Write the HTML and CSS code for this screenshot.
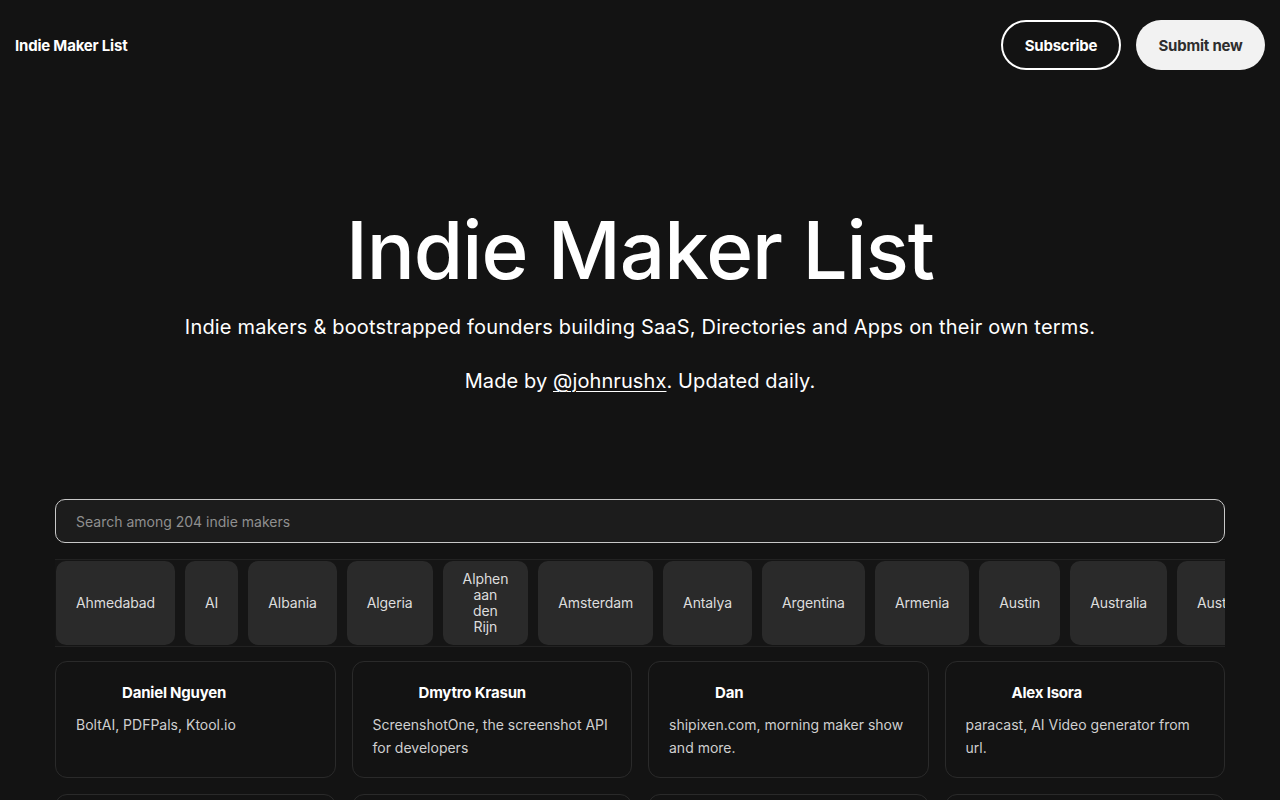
FILE: index.html
```html
<!DOCTYPE html>
<html lang="en">
<head>
<meta charset="utf-8">
<title>Indie Maker List</title>
<link rel="stylesheet" href="styles.css">
</head>
<body>
<header class="topbar">
  <a class="brand" href="#">Indie Maker List</a>
  <nav class="actions">
    <a class="btn btn-outline" href="#">Subscribe</a>
    <a class="btn btn-solid" href="#">Submit new</a>
  </nav>
</header>

<section class="hero">
  <h1 class="hero-title">Indie Maker List</h1>
  <p class="hero-sub">Indie makers &amp; bootstrapped founders building SaaS, Directories and Apps on their own terms.</p>
  <p class="hero-by">Made by <a href="#">@johnrushx</a>. Updated daily.</p>
</section>

<main class="content">
  <input class="search" type="text" placeholder="Search among 204 indie makers">
  <div class="tags">
    <span class="tag">Ahmedabad</span>
    <span class="tag">AI</span>
    <span class="tag">Albania</span>
    <span class="tag">Algeria</span>
    <span class="tag">Alphen aan den Rijn</span>
    <span class="tag">Amsterdam</span>
    <span class="tag">Antalya</span>
    <span class="tag">Argentina</span>
    <span class="tag">Armenia</span>
    <span class="tag">Austin</span>
    <span class="tag">Australia</span>
    <span class="tag">Austria</span>
    <span class="tag">Bali</span>
  </div>
  <div class="grid">
    <article class="card">
      <div class="card-head"><span class="avatar"></span><h3 class="name">Daniel Nguyen</h3></div>
      <p class="desc">BoltAI, PDFPals, Ktool.io</p>
    </article>
    <article class="card">
      <div class="card-head"><span class="avatar"></span><h3 class="name">Dmytro Krasun</h3></div>
      <p class="desc">ScreenshotOne, the screenshot API for developers</p>
    </article>
    <article class="card">
      <div class="card-head"><span class="avatar"></span><h3 class="name">Dan</h3></div>
      <p class="desc">shipixen.com, morning maker show and more.</p>
    </article>
    <article class="card">
      <div class="card-head"><span class="avatar"></span><h3 class="name">Alex Isora</h3></div>
      <p class="desc">paracast, AI Video generator from url.</p>
    </article>
    <article class="card">
      <div class="card-head"><span class="avatar"></span><h3 class="name">Marc Lou</h3></div>
      <p class="desc">ShipFast, ByeDispute and more.</p>
    </article>
    <article class="card">
      <div class="card-head"><span class="avatar"></span><h3 class="name">Pieter Levels</h3></div>
      <p class="desc">Nomad List, Remote OK, Photo AI</p>
    </article>
    <article class="card">
      <div class="card-head"><span class="avatar"></span><h3 class="name">Tony Dinh</h3></div>
      <p class="desc">TypingMind, DevUtils</p>
    </article>
    <article class="card">
      <div class="card-head"><span class="avatar"></span><h3 class="name">Danny Postma</h3></div>
      <p class="desc">HeadshotPro, Landingfolio</p>
    </article>
  </div>
</main>
</body>
</html>
```

FILE: styles.css
```css
* { box-sizing: border-box; }

html, body {
  margin: 0;
  padding: 0;
  background: #131313;
  color: #ffffff;
  font-family: Inter, "Noto Sans", "Liberation Sans", sans-serif;
}

a { color: inherit; text-decoration: none; }

.topbar {
  display: flex;
  align-items: center;
  justify-content: space-between;
  padding: 20px 15px;
}

.brand {
  font-size: 15px;
  font-weight: 700;
  letter-spacing: -0.2px;
}

.actions {
  display: flex;
  gap: 15px;
}

.btn {
  display: inline-flex;
  align-items: center;
  justify-content: center;
  height: 50px;
  border-radius: 25px;
  font-size: 15px;
  font-weight: 700;
  letter-spacing: -0.2px;
}

.btn-outline {
  width: 120px;
  border: 2px solid #ffffff;
  color: #ffffff;
}

.btn-solid {
  width: 129px;
  background: #f2f2f2;
  color: #2e2e2e;
}

.hero {
  text-align: center;
  padding-top: 112px;
}

.hero-title {
  margin: 0;
  font-size: 80px;
  font-weight: 500;
  line-height: 96px;
  letter-spacing: -1px;
}

.hero-sub {
  margin: 15px 0 0;
  font-size: 20px;
  line-height: 28px;
  font-weight: 400;
  letter-spacing: 0.18px;
}

.hero-by {
  margin: 26px 0 0;
  font-size: 20px;
  line-height: 28px;
  letter-spacing: 0.1px;
}

.hero-by a {
  text-decoration: underline;
  text-underline-offset: 3px;
  text-decoration-thickness: 1px;
}

.content {
  padding: 104px 55px 0;
}

.search {
  display: block;
  width: 100%;
  height: 44px;
  padding: 0 20px;
  background: #1c1c1c;
  border: 1px solid #c8c8c8;
  border-radius: 10px;
  color: #ffffff;
  font-family: inherit;
  font-size: 14px;
  outline: none;
}

.search::placeholder { color: #8f8f8f; }

.tags {
  display: flex;
  gap: 10px;
  margin-top: 16px;
  padding: 1px;
  overflow: hidden;
  background: #151515;
  border: 1px solid #222222;
  border-width: 1px 0 1px 0;
}

.tag {
  display: flex;
  align-items: center;
  justify-content: center;
  min-height: 83px;
  padding: 10px 20px;
  background: #2a2a2a;
  border-radius: 10px;
  color: #dddddd;
  font-size: 14px;
  line-height: 16px;
  text-align: center;
  letter-spacing: -0.1px;
}

.grid {
  display: grid;
  grid-template-columns: repeat(4, 1fr);
  gap: 16px;
  margin-top: 14px;
}

.card {
  min-height: 117px;
  padding: 20px 20px 18px;
  border: 1px solid #2a2a2a;
  border-radius: 12px;
}

.card-head {
  display: flex;
  align-items: center;
  gap: 10px;
  height: 20px;
}

.avatar {
  width: 36px;
  height: 20px;
  flex: none;
}

.name {
  margin: 0;
  font-size: 15px;
  font-weight: 700;
  letter-spacing: -0.2px;
}

.desc {
  margin: 11px 0 0;
  font-size: 14px;
  line-height: 23px;
  color: #cfcfcf;
}
```
